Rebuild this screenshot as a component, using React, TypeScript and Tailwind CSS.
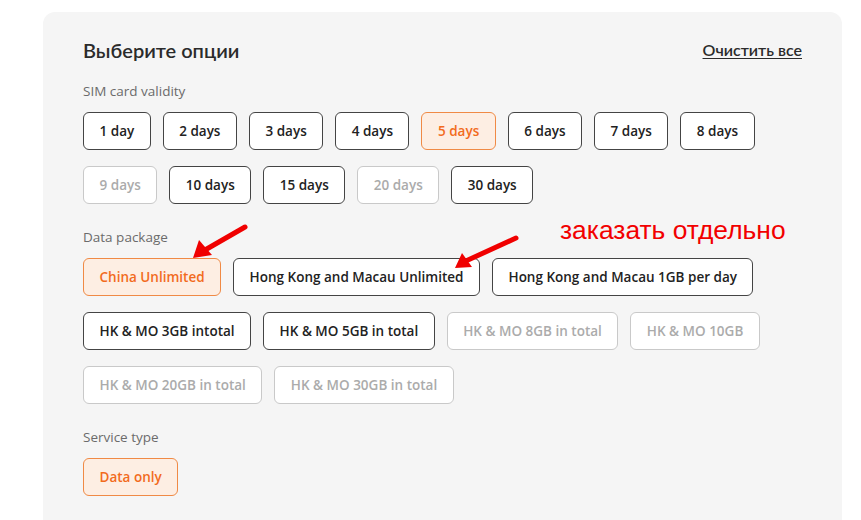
import React from "react";

type Opt = { label: string; state?: "on" | "off" };

const validity: Opt[] = [
  { label: "1 day" },
  { label: "2 days" },
  { label: "3 days" },
  { label: "4 days" },
  { label: "5 days", state: "on" },
  { label: "6 days" },
  { label: "7 days" },
  { label: "8 days" },
  { label: "9 days", state: "off" },
  { label: "10 days" },
  { label: "15 days" },
  { label: "20 days", state: "off" },
  { label: "30 days" },
];

const packages: Opt[] = [
  { label: "China Unlimited", state: "on" },
  { label: "Hong Kong and Macau Unlimited" },
  { label: "Hong Kong and Macau 1GB per day" },
  { label: "HK & MO 3GB intotal" },
  { label: "HK & MO 5GB in total" },
  { label: "HK & MO 8GB in total", state: "off" },
  { label: "HK & MO 10GB", state: "off" },
  { label: "HK & MO 20GB in total", state: "off" },
  { label: "HK & MO 30GB in total", state: "off" },
];

const service: Opt[] = [{ label: "Data only", state: "on" }];

function Chip({ opt }: { opt: Opt }) {
  const tone =
    opt.state === "on"
      ? "border-[#f08a45] bg-[#fdeee3] text-[#f26b1d]"
      : opt.state === "off"
        ? "border-[#c9c9c9] bg-white text-[#ababab]"
        : "border-[#444444] bg-white text-[#222222]";
  return (
    <button
      type="button"
      className={`flex h-[38px] items-center rounded-[6px] border px-[15.5px] text-[13.5px] font-semibold ${tone}`}
    >
      {opt.label}
    </button>
  );
}

function Section({ title, items, first }: { title: string; items: Opt[]; first?: boolean }) {
  return (
    <section className={first ? "mt-[17px]" : "mt-[23px]"}>
      <div className="text-[13.5px] leading-5 text-[#6b6b6b]">{title}</div>
      <div className="mt-[11px] flex flex-wrap gap-x-3 gap-y-4">
        {items.map((o) => (
          <Chip key={o.label} opt={o} />
        ))}
      </div>
    </section>
  );
}

export default function App() {
  return (
    <div
      className="relative min-h-screen bg-white pl-[43px] pr-[19px] pt-3"
      style={{ fontFamily: '"Open Sans", sans-serif' }}
    >
      <div className="rounded-[12px] bg-[#f5f5f5] px-10 pb-10 pt-6">
        {/* Header */}
        <div
          className="flex h-7 items-center justify-between"
          style={{ fontFamily: 'Lato, "Open Sans", sans-serif' }}
        >
          <h2 className="text-[20px] font-semibold text-[#2b2b2b]">
            Выберите опции
          </h2>
          <a className="text-[16px] font-semibold text-[#2b2b2b] underline underline-offset-2">
            Очистить все
          </a>
        </div>

        <Section title="SIM card validity" items={validity} first />
        <Section title="Data package" items={packages} />
        <Section title="Service type" items={service} />
      </div>

      {/* Annotation */}
      <div
        className="absolute left-[560px] top-[217px] text-[26.4px] leading-[26px] text-[#f20000]"
        style={{ fontFamily: '"Liberation Sans", Arial, sans-serif' }}
      >
        заказать отдельно
      </div>
      <svg
        className="pointer-events-none absolute left-0 top-0"
        width="861"
        height="520"
        viewBox="0 0 861 520"
      >
        <line x1="245" y1="227" x2="205" y2="250" stroke="#f00000" strokeWidth="5" strokeLinecap="round" />
        <polygon points="193,258 199,240 212,255" fill="#f00000" />
        <line x1="516" y1="238" x2="468" y2="260" stroke="#f00000" strokeWidth="5" strokeLinecap="round" />
        <polygon points="455,268 462,253 472,267" fill="#f00000" />
      </svg>
    </div>
  );
}
